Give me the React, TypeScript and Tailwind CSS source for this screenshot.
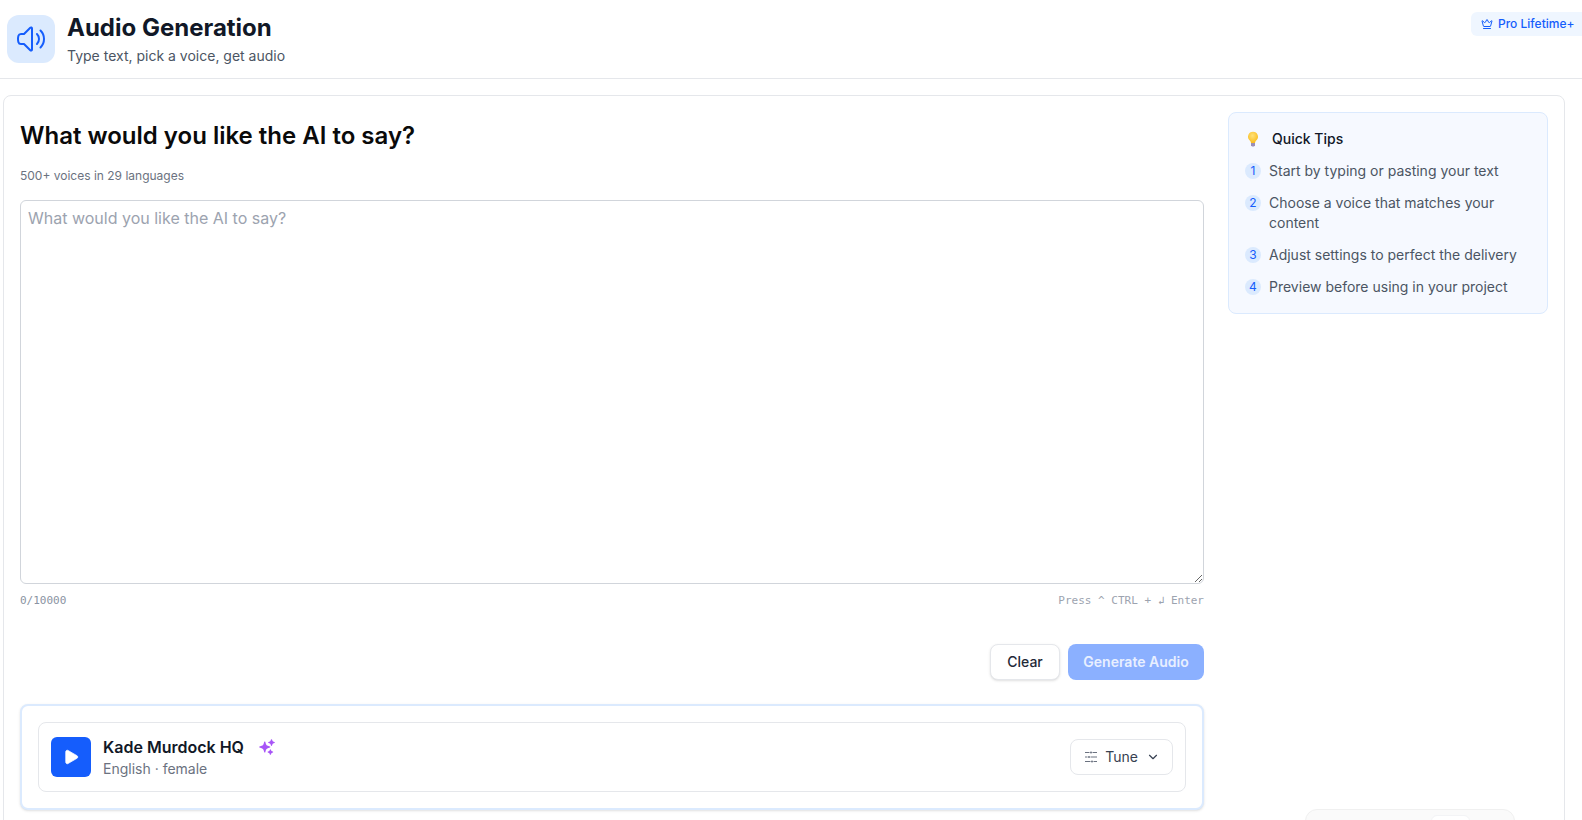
import { Crown, Play, ChevronDown } from "lucide-react";
import { HiSparkles } from "react-icons/hi2";

const tips: [string, string][] = [
  ["1", "Start by typing or pasting your text"],
  ["2", "Choose a voice that matches your content"],
  ["3", "Adjust settings to perfect the delivery"],
  ["4", "Preview before using in your project"],
];

function Bulb() {
  return (
    <svg width="14" height="16" viewBox="0 0 14 16" className="shrink-0">
      <defs>
        <radialGradient id="bulb" cx="0.45" cy="0.35" r="0.7">
          <stop offset="0" stopColor="#ffe27a" />
          <stop offset="1" stopColor="#f9b916" />
        </radialGradient>
      </defs>
      <path d="M7 .8a5 5 0 0 0-3.200 8.800c.8.700 1.200 1.500 1.200 2.400h4c0-.9.400-1.700 1.200-2.400A5 5 0 0 0 7 .8z" fill="url(#bulb)" />
      <path d="M5 12h4v2.200L8 15.500H6l-1-1.300z" fill="#9a8fb8" />
    </svg>
  );
}

function SpeakerWave() {
  return (
    <svg width="32" height="32" viewBox="0 0 24 24" fill="none" stroke="#155dfc" strokeWidth="1.5" strokeLinecap="round" strokeLinejoin="round">
      <path d="M19.114 5.636a9 9 0 0 1 0 12.728M16.463 8.288a5.25 5.25 0 0 1 0 7.424M6.750 8.250l4.720-4.720a.75.75 0 0 1 1.280.53v15.880a.75.75 0 0 1-1.280.53l-4.720-4.720H4.510c-.88 0-1.704-.507-1.938-1.354A9.009 9.009 0 0 1 2.250 12c0-.83.112-1.633.322-2.396C2.806 8.756 3.630 8.250 4.510 8.250H6.750Z" />
    </svg>
  );
}

function TuneIcon() {
  return (
    <svg width="12" height="12" viewBox="0 0 12 12" fill="none" stroke="#6b7280" strokeWidth="1" className="shrink-0">
      <path d="M0 1.500h4.500M7.500 1.500H12M0 6h2.500M5.500 6H12M0 10.500h5.500M8.500 10.500H12" />
      <circle cx="6" cy="1.500" r="1" fill="#6b7280" stroke="none" />
      <circle cx="4" cy="6" r="1" fill="#6b7280" stroke="none" />
      <circle cx="7" cy="10.500" r="1" fill="#6b7280" stroke="none" />
    </svg>
  );
}

export default function App() {
  return (
    <div className="relative h-[820px] w-[1582px] overflow-hidden bg-white font-['Inter',sans-serif]">
      <header className="flex h-[79px] items-start justify-between border-b border-[#e5e7eb]">
        <div className="flex items-start gap-3 pl-[7px] pt-[13px]">
          <div className="mt-[2px] flex h-12 w-12 items-center justify-center rounded-xl bg-[#dbeafe]">
            <SpeakerWave />
          </div>
          <div>
            <h1 className="text-2xl leading-[30px] font-bold text-[#111827]">Audio Generation</h1>
            <p className="mt-[3px] text-sm leading-5 text-[#4b5563]">Type text, pick a voice, get audio</p>
          </div>
        </div>
        <div className="mt-3 flex h-6 w-[111px] items-center gap-[5px] rounded-l-md bg-[#eff6ff] pl-[10px] text-xs leading-4 font-medium text-[#155dfc]">
          <Crown size={12} />
          <span>Pro Lifetime+</span>
        </div>
      </header>

      <main className="pl-[3px] pr-[17px] pt-4">
        <div className="flex h-[800px] gap-[24px] rounded-lg border border-[#e5e7eb] bg-white p-4">
          <section className="w-[1184px] shrink-0 pt-2">
            <h2 className="text-2xl leading-8 font-semibold text-[#0a0a0a]">What would you like the AI to say?</h2>
            <p className="mt-4 text-xs leading-4 text-[#6b7280]">500+ voices in 29 languages</p>
            <textarea
              placeholder="What would you like the AI to say?"
              className="mt-4 block h-[384px] w-full rounded-md border border-[#d1d5db] px-[7px] py-[5px] text-base leading-6 outline-none placeholder:text-[#9ca3af]"
            />
            <div className="mt-[9px] flex justify-between font-['DejaVu_Sans_Mono',monospace] text-[11px] leading-4">
              <span className="text-[#8a93a2]">0/10000</span>
              <span className="text-[#9ca3af]">Press ^ CTRL + ↲ Enter</span>
            </div>
            <div className="mt-[35px] flex justify-end gap-2">
              <button className="h-9 w-[70px] rounded-lg border border-[#e5e7eb] bg-white text-sm font-medium text-[#1f2937] shadow-sm">Clear</button>
              <button className="h-9 w-[136px] rounded-lg bg-[#8bb0ff] text-sm font-semibold text-[#e8efff]">Generate Audio</button>
            </div>
            <div className="mt-6 rounded-lg border-2 border-[#dbeafe] bg-white p-4 shadow-sm">
              <div className="flex h-[70px] items-center justify-between rounded-lg border border-[#e5e7eb] px-3">
                <div className="flex items-center gap-3">
                  <div className="flex h-10 w-10 items-center justify-center rounded-md bg-[#155dfc]">
                    <Play size={18} strokeWidth={1} fill="#ffffff" className="text-white" />
                  </div>
                  <div>
                    <div className="flex items-center gap-[14px]">
                      <span className="text-base leading-6 font-semibold text-[#111827]">Kade Murdock HQ</span>
                      <HiSparkles size={18} className="text-[#a855f7]" />
                    </div>
                    <p className="text-sm leading-5 text-[#6b7280]">English · female</p>
                  </div>
                </div>
                <button className="flex h-9 w-[103px] items-center justify-center gap-2 rounded-lg border border-[#e5e7eb] pl-[2px] text-sm text-[#374151]">
                  <TuneIcon />
                  <span>Tune</span>
                  <ChevronDown size={14} />
                </button>
              </div>
            </div>
          </section>

          <aside className="h-[202px] w-[320px] shrink-0 rounded-lg border border-[#dbeafe] bg-[#f6f9ff] px-4 py-4">
            <div className="flex items-center gap-3 pl-px text-sm leading-5 font-medium text-[#111827]">
              <Bulb />
              <span>Quick Tips</span>
            </div>
            <ol className="mt-3 flex flex-col gap-3">
              {tips.map(([n, t]) => (
                <li key={n} className="flex gap-2 text-sm leading-5 text-[#4b5563]">
                  <span className="mt-[2px] flex h-4 w-4 shrink-0 items-center justify-center rounded-full bg-[#dbeafe] text-xs text-[#155dfc]">{n}</span>
                  <span>{t}</span>
                </li>
              ))}
            </ol>
          </aside>
        </div>
      </main>

      <div className="absolute left-[1305px] top-[809px] h-10 w-[210px] rounded-xl border border-[#f0f0f0] bg-[#fafafa]">
        <div className="absolute left-[125px] top-[5px] h-8 w-[39px] rounded-md border border-[#f3f4f6] bg-white" />
      </div>
    </div>
  );
}
